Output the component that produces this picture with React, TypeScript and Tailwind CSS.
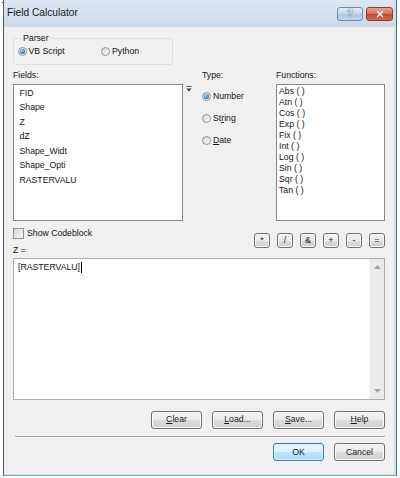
import { X } from "lucide-react";

const btn =
  "flex items-center justify-center rounded-[3px] border border-[#707070] bg-[linear-gradient(#f2f2f2_0%,#ebebeb_50%,#dddddd_51%,#cfcfcf_100%)] shadow-[inset_0_0_0_1px_#fbfbfb] text-[#1b1b1b]";

const fields = ["FID", "Shape", "Z", "dZ", "Shape_Widt", "Shape_Opti", "RASTERVALU"];
const functions = ["Abs ( )", "Atn ( )", "Cos ( )", "Exp ( )", "Fix ( )", "Int ( )", "Log ( )", "Sin ( )", "Sqr ( )", "Tan ( )"];
const operators = ["*", "/", "&", "+", "-", "="];

function Radio({ checked }: { checked?: boolean }) {
  return (
    <span className="flex h-[9px] w-[9px] shrink-0 items-center justify-center rounded-full border border-[#8f9399] bg-[linear-gradient(135deg,#d6d6d6,#fbfbfb)]">
      {checked ? (
        <span className="h-[5px] w-[5px] rounded-full bg-[radial-gradient(circle_at_40%_35%,#9bd6f6,#2a6aa6_70%,#1b4f80)]" />
      ) : null}
    </span>
  );
}

export default function App() {
  return (
    <div className="flex h-[478px] w-[400px] bg-white font-['Liberation_Sans',Arial,sans-serif] text-[8.7px] leading-[11px] text-[#141414]">
      <div className="ml-[2px] mt-[2px] h-[1px] w-[1px] bg-[#555]" />
      <div className="ml-0 flex h-[476px] w-[394px] flex-col border-x border-b border-l-[#4a5868] border-r-[#3a6d9a] border-b-[#6fa6c8] bg-[#d3dfeb] pr-[2px] pb-[1px]">
        {/* title bar */}
        <div className="flex h-[27px] shrink-0 items-start bg-[linear-gradient(#dde7f2,#cbd9e8)] pt-[7px] pl-[3px]">
          <span className="mt-[-1px] text-[10.2px] leading-[14px] text-[#1a1a1a]">Field Calculator</span>
          <div className="ml-auto mr-[1px] flex gap-[3px]">
            <div className="flex h-[14px] w-[26px] items-center justify-center rounded-[3px] border border-[#7089a6] bg-[linear-gradient(#e3ecf6,#c5d6e9_50%,#b3c8df_51%,#c2d6ec)] text-[10px] font-bold leading-none text-[#eef3f8] [text-shadow:0_0_1px_#3f5670,0_0_1px_#3f5670]">
              ?
            </div>
            <div className="flex h-[14px] w-[27px] items-center justify-center rounded-[3px] border border-[#8a3a2e] bg-[linear-gradient(#e9a394,#d66a55_50%,#c2442f_51%,#d46a52)]">
              <X size={10} strokeWidth={3.5} color="#ffffff" />
            </div>
          </div>
        </div>

        {/* client area */}
        <div className="flex flex-1 flex-col bg-[#f0f0f0] px-[9px]">
          <fieldset className="mt-[6px] w-[160px] rounded-[3px] border border-[#d5dfe5] pb-[7px] pl-[3px]">
            <legend className="ml-[5px] px-[1px] leading-[11px]">Parser</legend>
            <div className="mt-[2px] flex items-center pl-[0.5px]">
              <div className="flex w-[83px] items-center gap-[2px]">
                <Radio checked />
                <span>VB Script</span>
              </div>
              <div className="flex items-center gap-[2.5px]">
                <Radio />
                <span>Python</span>
              </div>
            </div>
          </fieldset>

          {/* fields / type / functions */}
          <div className="mt-[4.5px] flex">
            <div className="flex w-[170px] flex-col">
              <span className="h-[11px]">Fields:</span>
              <div className="mt-[3px] h-[137px] border border-[#828790] bg-white pl-[5.5px] pt-[1px] leading-[14.5px]">
                {fields.map((f) => (
                  <div key={f}>{f}</div>
                ))}
              </div>
            </div>
            <div className="ml-[3px] mt-[16px] w-[6px]">
              <svg width="6" height="6" viewBox="0 0 6 6">
                <line x1="0.5" y1="0.5" x2="5.5" y2="0.5" stroke="#555" strokeWidth="1" />
                <path d="M0.5 2.5 L5.5 2.5 L3 5.5 Z" fill="#333" />
              </svg>
            </div>
            <div className="ml-[9.5px] flex flex-col">
              <span className="h-[11px] pl-[0.5px]">Type:</span>
              <div className="mt-[10.5px] flex flex-col gap-[11px]">
                <div className="flex h-[11px] items-center gap-[2.5px]">
                  <Radio checked />
                  <span>Number</span>
                </div>
                <div className="flex h-[11px] items-center gap-[2.5px]">
                  <Radio />
                  <span>
                    St<span className="underline">r</span>ing
                  </span>
                </div>
                <div className="flex h-[11px] items-center gap-[2.5px]">
                  <Radio />
                  <span>
                    <span className="underline">D</span>ate
                  </span>
                </div>
              </div>
            </div>
            <div className="ml-auto flex w-[109px] flex-col">
              <span className="h-[11px]">Functions:</span>
              <div className="mt-[3px] h-[137px] border border-[#828790] bg-white pl-[2px] pt-[1.5px]">
                {functions.map((f) => (
                  <div key={f}>{f}</div>
                ))}
              </div>
            </div>
          </div>

          {/* codeblock + operators */}
          <div className="mt-[7px] flex">
            <div className="flex flex-col">
              <div className="flex h-[11px] items-center gap-[3px]">
                <span className="h-[11px] w-[11px] border border-[#8e8f8f] bg-[linear-gradient(135deg,#d4d4d4,#f7f7f7)]" />
                <span>Show Codeblock</span>
              </div>
              <span className="mt-[6.5px] h-[11px]">Z =</span>
            </div>
            <div className="ml-auto mt-[5px] flex gap-[7px]">
              {operators.map((o) => (
                <div key={o} className={`${btn} h-[15px] w-[16px] text-[9px] leading-none`}>
                  {o}
                </div>
              ))}
            </div>
          </div>

          {/* expression */}
          <div className="mt-[1.5px] flex h-[142px] border border-[#abadb3] bg-white">
            <div className="flex flex-1 items-start pl-[4px] pt-[3px]">
              <span>[RASTERVALU]</span>
              <span className="ml-[1px] h-[11px] w-[1px] bg-black" />
            </div>
            <div className="flex w-[15px] flex-col items-center justify-between border-l border-[#f4f4f4] bg-[#ebebeb] py-[6px]">
              <svg width="7" height="4" viewBox="0 0 7 4">
                <path d="M0 4 L3.5 0 L7 4 Z" fill="#a3a3a3" />
              </svg>
              <svg width="7" height="4" viewBox="0 0 7 4">
                <path d="M0 0 L3.5 4 L7 0 Z" fill="#a3a3a3" />
              </svg>
            </div>
          </div>

          {/* clear / load / save / help */}
          <div className="mt-[11px] flex justify-end gap-[10px]">
            <div className={`${btn} h-[18px] w-[51px]`}>
              <span>
                <span className="underline">C</span>lear
              </span>
            </div>
            <div className={`${btn} h-[18px] w-[51px]`}>
              <span>
                <span className="underline">L</span>oad...
              </span>
            </div>
            <div className={`${btn} h-[18px] w-[51px]`}>
              <span>
                <span className="underline">S</span>ave...
              </span>
            </div>
            <div className={`${btn} h-[18px] w-[51px]`}>
              <span>
                <span className="underline">H</span>elp
              </span>
            </div>
          </div>

          <div className="ml-[2px] mt-[7.5px] h-[2px] border-t border-b border-t-[#a0a0a0] border-b-white" />

          <div className="mt-[5px] flex justify-end gap-[10px]">
            <div className="flex h-[18px] w-[51px] items-center justify-center rounded-[3px] border border-[#3c7fb1] bg-[linear-gradient(#eaf6fd_0%,#d9f0fc_50%,#bee6fd_51%,#a7d9f5_100%)] shadow-[inset_0_0_0_1px_#d8eefb]">
              OK
            </div>
            <div className={`${btn} h-[18px] w-[51px]`}>Cancel</div>
          </div>
        </div>
      </div>
    </div>
  );
}
